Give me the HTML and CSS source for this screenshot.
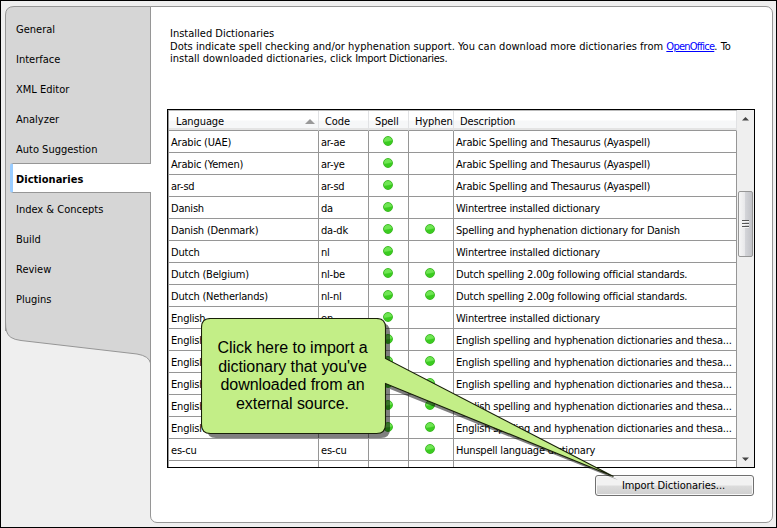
FILE: index.html
```
<!DOCTYPE html>
<html lang="en">
<head>
<meta charset="utf-8">
<title>Options</title>
<link rel="stylesheet" href="styles.css">
</head>
<body>
<div class="window">
  <nav class="sidebar">
    <svg class="sidebar-shape" width="146" height="360" viewBox="0 0 146 360"><path d="M.5 325V9Q.5.5 9 .5H145.5V357Q144 350 132 348L16 334.500Q3 333 1.500 325Q.5 322 .5 316" fill="#d6d6d6" stroke="#969696"/></svg>
    <ul class="tabs">
      <li>General</li><li>Interface</li><li>XML Editor</li><li>Analyzer</li><li>Auto Suggestion</li>
      <li class="active">Dictionaries</li><li>Index &amp; Concepts</li><li>Build</li><li>Review</li><li>Plugins</li>
    </ul>
  </nav>
  <main class="panel">
    <div class="intro">
      <p>Installed Dictionaries</p>
      <p class="wide">Dots indicate spell checking and/or hyphenation support. You can download more dictionaries from <a>OpenOffice</a>. To</p>
      <p>install downloaded dictionaries, click <span class="tight">Import Dictionaries.</span></p>
    </div>
    <div class="list">
      <div class="grid">
        <div class="row head"><span>Language<i class="sort"></i></span><span>Code</span><span>Spell</span><span>Hyphen</span><span>Description</span></div>
        <div class="row"><span>Arabic (UAE)</span><span>ar-ae</span><span><i class="dot"></i></span><span></span><span>Arabic Spelling and Thesaurus (Ayaspell)</span></div>
        <div class="row"><span>Arabic (Yemen)</span><span>ar-ye</span><span><i class="dot"></i></span><span></span><span>Arabic Spelling and Thesaurus (Ayaspell)</span></div>
        <div class="row"><span>ar-sd</span><span>ar-sd</span><span><i class="dot"></i></span><span></span><span>Arabic Spelling and Thesaurus (Ayaspell)</span></div>
        <div class="row"><span>Danish</span><span>da</span><span><i class="dot"></i></span><span></span><span>Wintertree installed dictionary</span></div>
        <div class="row"><span>Danish (Denmark)</span><span>da-dk</span><span><i class="dot"></i></span><span><i class="dot"></i></span><span>Spelling and hyphenation dictionary for Danish</span></div>
        <div class="row"><span>Dutch</span><span>nl</span><span><i class="dot"></i></span><span></span><span>Wintertree installed dictionary</span></div>
        <div class="row"><span>Dutch (Belgium)</span><span>nl-be</span><span><i class="dot"></i></span><span><i class="dot"></i></span><span>Dutch spelling 2.00g following official standards.</span></div>
        <div class="row"><span>Dutch (Netherlands)</span><span>nl-nl</span><span><i class="dot"></i></span><span><i class="dot"></i></span><span>Dutch spelling 2.00g following official standards.</span></div>
        <div class="row"><span>English</span><span>en</span><span><i class="dot"></i></span><span></span><span>Wintertree installed dictionary</span></div>
        <div class="row"><span>English</span><span></span><span><i class="dot"></i></span><span><i class="dot"></i></span><span class="long">English spelling and hyphenation dictionaries and thesa...</span></div>
        <div class="row"><span>English</span><span></span><span><i class="dot"></i></span><span><i class="dot"></i></span><span class="long">English spelling and hyphenation dictionaries and thesa...</span></div>
        <div class="row"><span>English</span><span></span><span><i class="dot"></i></span><span><i class="dot"></i></span><span class="long">English spelling and hyphenation dictionaries and thesa...</span></div>
        <div class="row"><span>English</span><span></span><span><i class="dot"></i></span><span><i class="dot"></i></span><span class="long">English spelling and hyphenation dictionaries and thesa...</span></div>
        <div class="row"><span>English</span><span></span><span><i class="dot"></i></span><span><i class="dot"></i></span><span class="long">English spelling and hyphenation dictionaries and thesa...</span></div>
        <div class="row"><span>es-cu</span><span>es-cu</span><span></span><span><i class="dot"></i></span><span>Hunspell language dictionary</span></div>
        <div class="row last"><span></span><span></span><span></span><span></span><span></span></div>
      </div>
      <div class="scrollbar">
        <svg width="16" height="356" viewBox="0 0 16 356">
          <defs><linearGradient id="thumb"><stop offset="0" stop-color="#f7f7f7"/><stop offset=".45" stop-color="#e8e8ea"/><stop offset=".5" stop-color="#d3d4d8"/><stop offset="1" stop-color="#c0c1c6"/></linearGradient></defs>
          <path d="M4 10.500h7L7.500 7z" fill="#444"/>
          <rect x=".5" y="81.500" width="14" height="65" rx="1.500" fill="url(#thumb)" stroke="#969696"/>
          <path d="M4 110.500h7M4 113.500h7M4 116.500h7" stroke="#555"/>
          <path d="M4 111.500h7M4 114.500h7M4 117.500h7" stroke="#f4f4f4"/>
          <path d="M4 347.500h7L7.500 351z" fill="#444"/>
        </svg>
      </div>
    </div>
    <button class="import">Import Dictionaries...</button>
  </main>
  <div class="callout">
    <svg width="430" height="180" viewBox="0 0 430 180">
      <path d="M15 5H180Q189 5 189 14V44L417 162L189 71V111Q189 120 180 120H15Q6 120 6 111V14Q6 5 15 5Z" fill="#000" fill-opacity=".5"/>
      <path d="M9.500.5H175.500Q184.500.5 184.500 9.500V40.500L412.500 158.500L184.500 65.500V106.500Q184.500 115.500 175.500 115.500H9.500Q.5 115.500.5 106.500V9.500Q.5.5 9.500.5Z" fill="#c3ee87" stroke="#182008" stroke-width="1.100"/>
    </svg>
    <div class="callout-text"><p>Click here to import a</p><p>dictionary that you've</p><p>downloaded from an</p><p>external source.</p></div>
  </div>
</div>
</body>
</html>
```
FILE: styles.css
```
* { box-sizing: border-box; }
body { margin: 0; font: 11px/14px "DejaVu Sans Condensed", "DejaVu Sans", sans-serif; font-stretch: condensed; color: #000; }
p, ul { margin: 0; padding: 0; }
.window { position: relative; width: 777px; height: 528px; border: 1px solid #000; background: #efefef; padding: 5px 3px 4px 4px; display: flex; overflow: hidden; }
.sidebar { position: relative; width: 145px; z-index: 1; }
.sidebar-shape { position: absolute; left: 0; top: 0; }
.tabs { position: relative; list-style: none; padding-top: 7px; width: 146px; }
.tabs li { height: 30px; line-height: 33px; padding-left: 11px; white-space: nowrap; }
.tabs .active { margin-left: 5px; padding-left: 3px; height: 30px; line-height: 31px; background: #fff; border: 1px solid #969696; border-left: 3px solid #99ccff; border-right: 0; border-radius: 3px 0 0 3px; font-weight: bold; letter-spacing: .03px; }
.panel { width: 623px; height: 517px; background: #fff; border: 1px solid #969696; border-radius: 0 7px 7px 7px; padding: 20px 17px 0 16px; }
.intro { height: 82px; padding: 1px 0 0 3px; white-space: nowrap; line-height: 12.500px; }
.intro .wide { letter-spacing: .02px; }
.intro .tight { letter-spacing: -.3px; }
.intro a { color: #00f; text-decoration: underline; letter-spacing: -.75px; }
.list { width: 588px; height: 359px; border: 1px solid #000; display: flex; }
.grid { width: 569px; border-left: 1px solid #969696; border-top: 1px solid #bbb; overflow: hidden; }
.row { display: grid; grid-template-columns: 150px 50px 40px 45px 283px; height: 22px; }
.row span { border-right: 1px solid #969696; border-bottom: 1px solid #969696; padding-left: 2px; line-height: 23px; white-space: nowrap; overflow: hidden; letter-spacing: -.2px; }
.row .long { letter-spacing: -.19px; }
.row span:nth-child(3), .row span:nth-child(4) { padding: 0; display: flex; align-items: center; justify-content: center; }
.row.head { height: 20px; background: linear-gradient(#fff 0 45%, #f6f7f8 50% 90%); }
.row.head span, .row.head span:nth-child(n) { display: flex; align-items: center; justify-content: flex-start; padding: 1px 0 0 6px; border-right-color: #e1e2e4; line-height: 19px; box-shadow: inset 0 -2px #e4e4e4; letter-spacing: -.1px; }
.row.head span:first-child { padding-left: 7px; }
.row.last { height: 6px; }
.row.last span { border-bottom: 0; }
.sort { margin-left: auto; margin-right: 3px; border: 5px solid transparent; border-top: 0; border-bottom-color: #999; }
.dot { width: 10px; height: 10px; margin: 0 2px 1px 0; border-radius: 50%; background: linear-gradient(170deg, #6fe653 0 45%, #3bcc20 60%); border: 1px solid #3dbb24; }
.scrollbar { width: 17px; padding-left: 1px; background: #efefef; }
.scrollbar svg { display: block; }
.import { display: block; width: 159px; height: 21px; margin: 7px 0 0 428px; padding: 1px 2px 0 0; border: 1px solid #707070; border-radius: 3px; background: linear-gradient(#f2f2f2 0 48%, #dcdcdc 52%, #cfcfcf); box-shadow: inset 0 0 0 1px #f8f8f8; font: inherit; letter-spacing: -.05px; color: #000; }
.callout { position: absolute; z-index: 2; left: 200px; top: 317px; width: 430px; height: 180px; }
.callout svg { position: absolute; left: 0; top: 0; }
.callout-text { position: relative; width: 183px; padding-top: 21px; text-align: center; font: 16px/18.500px "Liberation Sans", Arial, sans-serif; letter-spacing: -.05px; white-space: nowrap; }
```
